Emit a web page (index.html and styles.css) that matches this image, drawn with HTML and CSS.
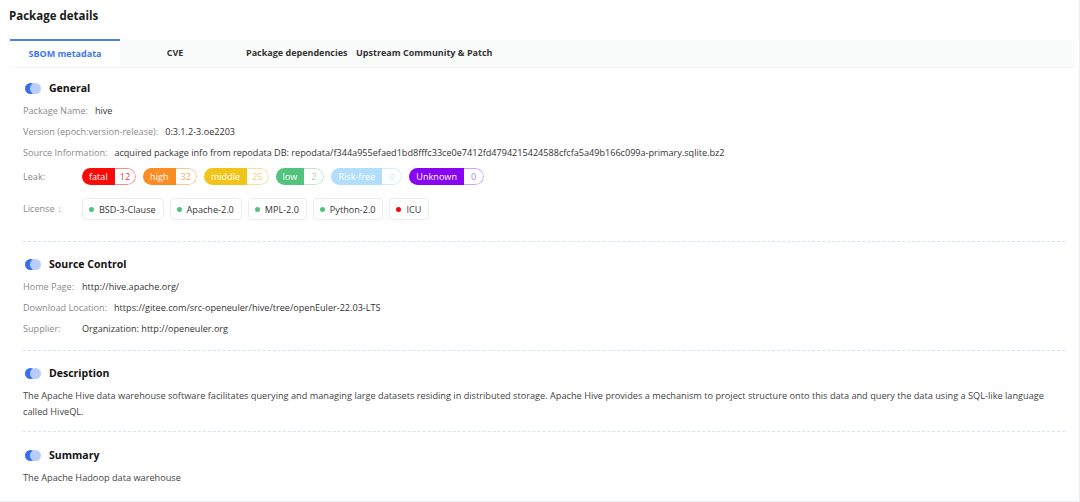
FILE: index.html
```html
<!doctype html>
<html>
<head>
    <title>Package details</title>
    <link rel="stylesheet" href="styles.css">
</head>
<body>
    <div class="page">
        <h1 class="page-title">Package details</h1>
        <div class="panel">
            <div class="tabs">
                <div class="tab active">SBOM metadata</div>
                <div class="tab">CVE</div>
                <div class="tab">Package dependencies</div>
                <div class="tab">Upstream Community &amp; Patch</div>
            </div>

            <div class="section first">
                <div class="section-title"><svg class="dot-icon" width="16" height="11" viewBox="0 0 16 11"><circle cx="5.5" cy="5.5" r="5.5" fill="#3a6ff0"/><circle cx="10.5" cy="5.5" r="5.5" fill="#b9cdfb"/></svg>General</div>
                <div class="row"><span class="label">Package Name:</span><span class="value">hive</span></div>
                <div class="row"><span class="label">Version (epoch:version-release):</span><span class="value">0:3.1.2-3.oe2203</span></div>
                <div class="row"><span class="label">Source Information:</span><span class="value">acquired package info from repodata DB: repodata/f344a955efaed1bd8fffc33ce0e7412fd4794215424588cfcfa5a49b166c099a-primary.sqlite.bz2</span></div>
                <div class="row leak-row">
                    <span class="label">Leak:</span>
                    <div class="pills">
                        <span class="pill fatal"><span class="pill-name">fatal</span><span class="pill-count">12</span></span>
                        <span class="pill high"><span class="pill-name">high</span><span class="pill-count">32</span></span>
                        <span class="pill middle"><span class="pill-name">middle</span><span class="pill-count">25</span></span>
                        <span class="pill low"><span class="pill-name">low</span><span class="pill-count">2</span></span>
                        <span class="pill riskfree"><span class="pill-name">Risk-free</span><span class="pill-count">0</span></span>
                        <span class="pill unknown"><span class="pill-name">Unknown</span><span class="pill-count">0</span></span>
                    </div>
                </div>
                <div class="row license-row">
                    <span class="label">License：</span>
                    <div class="licenses">
                        <span class="license"><i class="ldot"></i>BSD-3-Clause</span>
                        <span class="license"><i class="ldot"></i>Apache-2.0</span>
                        <span class="license"><i class="ldot"></i>MPL-2.0</span>
                        <span class="license"><i class="ldot"></i>Python-2.0</span>
                        <span class="license"><i class="ldot bad"></i>ICU</span>
                    </div>
                </div>
            </div>

            <div class="section">
                <div class="section-title"><svg class="dot-icon" width="16" height="11" viewBox="0 0 16 11"><circle cx="5.5" cy="5.5" r="5.5" fill="#3a6ff0"/><circle cx="10.5" cy="5.5" r="5.5" fill="#b9cdfb"/></svg>Source Control</div>
                <div class="row"><span class="label">Home Page:</span><span class="value">http://hive.apache.org/</span></div>
                <div class="row"><span class="label">Download Location:</span><span class="value">https://gitee.com/src-openeuler/hive/tree/openEuler-22.03-LTS</span></div>
                <div class="row"><span class="label">Supplier:</span><span class="value">Organization: http://openeuler.org</span></div>
            </div>

            <div class="section">
                <div class="section-title"><svg class="dot-icon" width="16" height="11" viewBox="0 0 16 11"><circle cx="5.5" cy="5.5" r="5.5" fill="#3a6ff0"/><circle cx="10.5" cy="5.5" r="5.5" fill="#b9cdfb"/></svg>Description</div>
                <p class="text">The Apache Hive data warehouse software facilitates querying and managing large datasets residing in distributed storage. Apache Hive provides a mechanism to project structure onto this data and query the data using a SQL-like language called HiveQL.</p>
            </div>

            <div class="section last">
                <div class="section-title"><svg class="dot-icon" width="16" height="11" viewBox="0 0 16 11"><circle cx="5.5" cy="5.5" r="5.5" fill="#3a6ff0"/><circle cx="10.5" cy="5.5" r="5.5" fill="#b9cdfb"/></svg>Summary</div>
                <p class="text">The Apache Hadoop data warehouse</p>
            </div>
        </div>
    </div>
</body>
</html>
```

FILE: styles.css
```css
html, body {
    margin: 0;
    background: #fff;
}
body {
    font-family: "Open Sans", "Noto Sans", sans-serif;
    font-size: 9.1px;
    color: #333;
}
.page {
    height: 501px;
    border-bottom: 1px solid #eceef0;
    border-right: 1px solid #eceef0;
    width: 1079px;
    overflow: hidden;
}
.page-title {
    margin: 0;
    padding: 8px 0 0 9px;
    height: 39px;
    box-sizing: border-box;
    font-size: 11.5px;
    font-weight: bold;
    color: #1a1a1a;
}
.panel {
    margin: 0 4px 0 10px;
}

/* Tabs */
.tabs {
    display: flex;
    height: 28px;
    background: #fafbfb;
    border-bottom: 1px solid #f3f5f6;
}
.tab {
    width: 110px;
    box-sizing: border-box;
    padding: 0 16px;
    line-height: 28px;
    text-align: center;
    white-space: nowrap;
    font-size: 9px;
    font-weight: bold;
    color: #333;
}
.tab.active {
    color: #3b78ef;
    background: #fff;
    border-top: 2px solid #4a80f2;
    line-height: 26px;
}

/* Sections */
.section {
    margin: 0 0 0 13px;
    width: 1042px;
    padding: 12px 0 11px;
    border-bottom: 1px dashed #d4e3f5;
}
.section.first {
    padding-top: 10px;
    padding-bottom: 21px;
}
.section.last {
    padding-top: 13px;
    border-bottom: none;
}
.section-title {
    display: flex;
    align-items: center;
    height: 20px;
    margin-bottom: 2px;
    font-size: 10.5px;
    font-weight: bold;
    color: #111;
}
.dot-icon {
    margin: 0 8px 0 2px;
}

.row {
    display: flex;
    align-items: center;
    height: 21px;
    white-space: nowrap;
}
.label {
    min-width: 52px;
    margin-right: 7px;
    color: #8a8a8a;
}
.value {
    color: #333;
}
.text {
    margin: 5px 0 0;
    font-size: 9.2px;
    line-height: 16px;
    color: #444;
}

/* Leak pills */
.leak-row {
    height: 26px;
}
.pills {
    display: flex;
    gap: 7px;
}
.pill {
    display: flex;
    height: 17px;
    line-height: 17px;
    border-radius: 9px;
    overflow: hidden;
}
.pill-name {
    padding: 0 7px;
    color: #fff;
}
.pill-count {
    min-width: 9px;
    padding: 0 5px;
    text-align: center;
    background: #fff;
    border: 1px solid;
    border-left: none;
    border-radius: 0 9px 9px 0;
    line-height: 15px;
}
.fatal .pill-name { background: #fb0a0a; }
.fatal .pill-count { color: #f5333a; border-color: #fb8a8a; }
.high .pill-name { background: #fb8c22; }
.high .pill-count { color: #f8ad72; border-color: #fbc796; }
.middle .pill-name { background: #f1c419; }
.middle .pill-count { color: #f3d36c; border-color: #f6e09a; }
.low .pill-name { background: #52c37c; }
.low .pill-count { color: #9fd8b4; border-color: #bde6cc; }
.riskfree .pill-name { background: #b2defd; }
.riskfree .pill-count { color: #d3eafb; border-color: #d3ebfd; }
.unknown .pill-name { background: #8904f2; }
.unknown .pill-count { color: #b37ef0; border-color: #cda4f6; }

/* Licenses */
.license-row {
    height: 22px;
    margin-top: 9px;
}
.licenses {
    display: flex;
    gap: 6px;
}
.license {
    display: flex;
    align-items: center;
    height: 22px;
    box-sizing: border-box;
    padding: 0 7px 0 6px;
    border: 1px solid #ebedef;
    border-radius: 4px;
    color: #333;
}
.ldot {
    width: 5px;
    height: 5px;
    border-radius: 50%;
    background: #4fc27d;
    margin-right: 5px;
}
.ldot.bad {
    background: #f50a0a;
}
```
